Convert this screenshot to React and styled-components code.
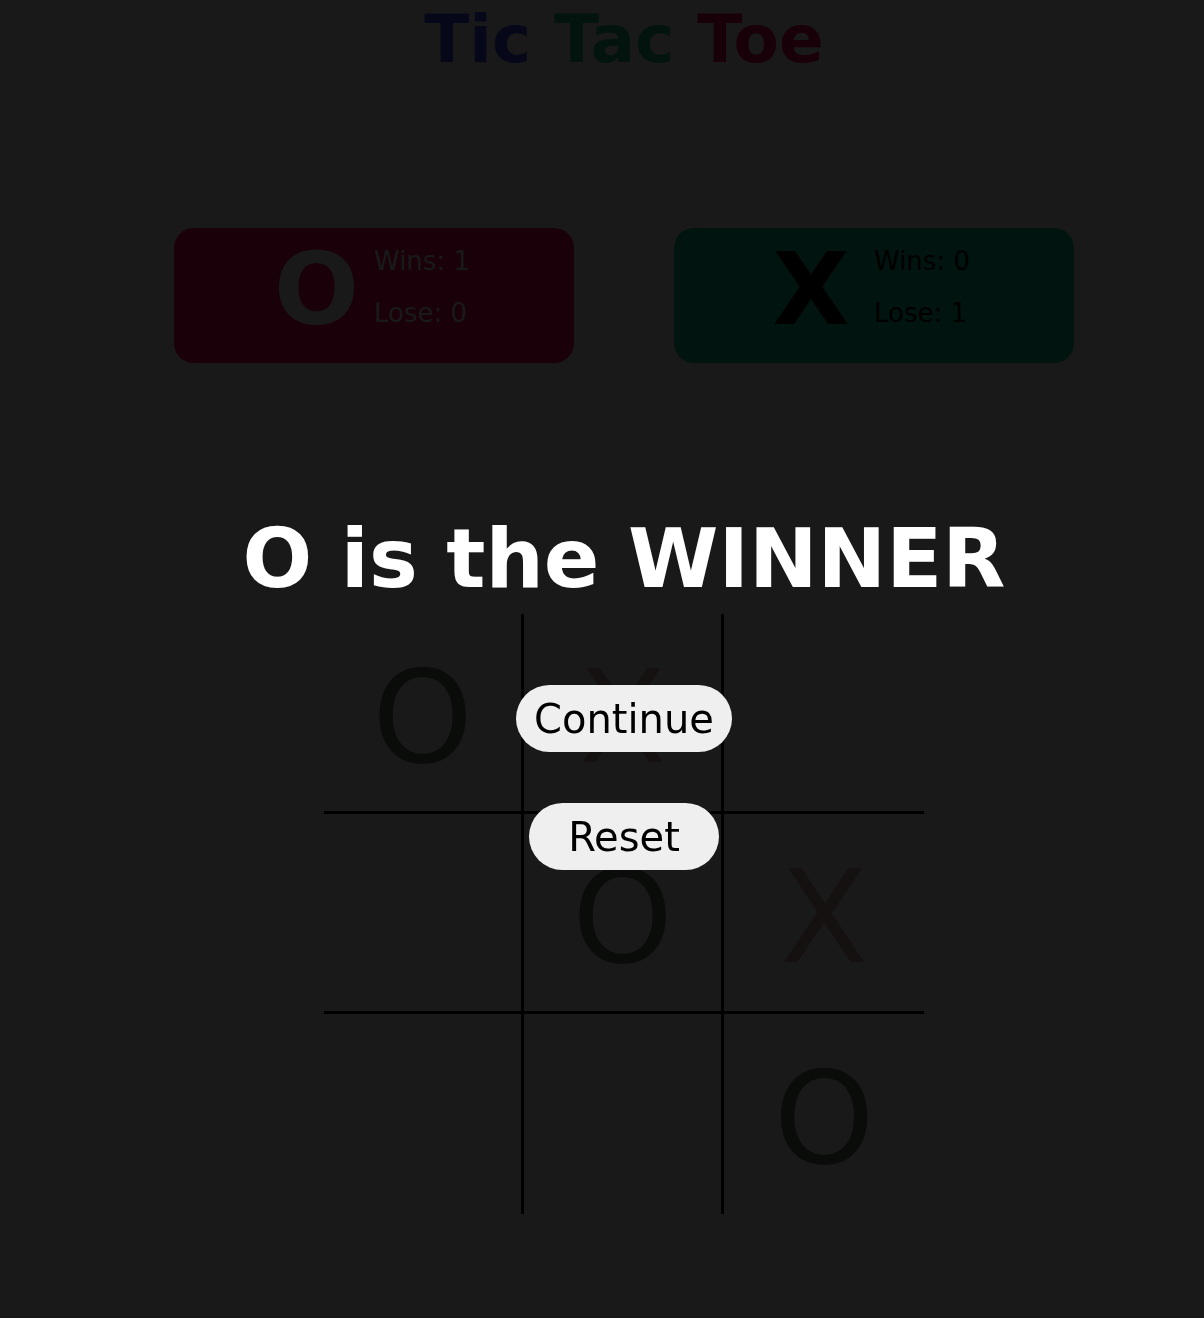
import styled, { createGlobalStyle } from "styled-components";

const GlobalStyle = createGlobalStyle`
  html, body {
    margin: 0;
    background: #ffffff;
    font-family: "DejaVu Sans", Verdana, sans-serif;
  }
`;

const Page = styled.div`
  display: flex;
  flex-direction: column;
  align-items: center;
  padding-left: 44px;
  box-sizing: border-box;
  width: 100%;
  min-height: 1318px;
`;

const Title = styled.h1`
  margin: 0;
  padding-top: 3px;
  font-size: 66px;
  line-height: 74px;
  font-weight: bold;
  white-space: nowrap;
`;

const TitleWord = styled.span`
  color: ${(p) => p.color};
`;

const Scores = styled.div`
  display: flex;
  gap: 100px;
  margin-top: 151px;
`;

const ScoreCard = styled.div`
  display: flex;
  align-items: flex-start;
  width: 400px;
  height: 135px;
  box-sizing: border-box;
  padding-left: ${(p) => p.pad}px;
  border-radius: 20px;
  background: ${(p) => p.bg};
  color: ${(p) => p.fg};
`;

const ScoreLetter = styled.div`
  width: 80px;
  margin-top: 12px;
  text-align: center;
  font-size: 100px;
  line-height: 100px;
  font-weight: bold;
`;

const ScoreLines = styled.div`
  display: flex;
  flex-direction: column;
  gap: 22px;
  margin-left: ${(p) => p.gap}px;
  padding-top: 18px;
  font-size: 26px;
  line-height: 30px;
`;

const Board = styled.div`
  display: grid;
  grid-template-columns: repeat(3, 200px);
  grid-template-rows: repeat(3, 200px);
  margin-top: 251px;
`;

const Cell = styled.div`
  display: flex;
  align-items: center;
  justify-content: center;
  box-sizing: border-box;
  padding-top: 10px;
  border-right: ${(p) => (p.right ? "3px solid #000" : "none")};
  border-bottom: ${(p) => (p.bottom ? "3px solid #000" : "none")};
  font-size: 128px;
  line-height: 128px;
  color: ${(p) => (p.mark === "X" ? "#dcaaaa" : "#667766")};
`;

const Overlay = styled.div`
  position: fixed;
  inset: 0;
  display: flex;
  flex-direction: column;
  align-items: center;
  box-sizing: border-box;
  padding-left: 44px;
  padding-top: 518px;
  background: rgba(0, 0, 0, 0.9);
`;

const Winner = styled.h2`
  margin: 0;
  font-size: 82px;
  line-height: 82px;
  font-weight: bold;
  color: #ffffff;
  white-space: nowrap;
`;

const Button = styled.button`
  margin-top: ${(p) => p.top}px;
  padding: 11px ${(p) => p.side}px 9px;
  border: none;
  border-radius: 34px;
  background: #efefef;
  color: #000;
  font-family: "DejaVu Sans", Verdana, sans-serif;
  font-size: 40px;
  line-height: 47px;
  cursor: pointer;
`;

const board = ["O", "X", "", "", "O", "X", "", "", "O"];

export default function App() {
  return (
    <>
      <GlobalStyle />
      <Page>
        <Title>
          <TitleWord color="#3c4bff">Tic</TitleWord>{" "}
          <TitleWord color="#14c882">Tac</TitleWord>{" "}
          <TitleWord color="#ff0050">Toe</TitleWord>
        </Title>
        <Scores>
          <ScoreCard bg="#ff0060" fg="#ffffff" pad={100}>
            <ScoreLetter>O</ScoreLetter>
            <ScoreLines gap={20}>
              <span>Wins: 1</span>
              <span>Lose: 0</span>
            </ScoreLines>
          </ScoreCard>
          <ScoreCard bg="#14c896" fg="#000000" pad={97}>
            <ScoreLetter>X</ScoreLetter>
            <ScoreLines gap={23}>
              <span>Wins: 0</span>
              <span>Lose: 1</span>
            </ScoreLines>
          </ScoreCard>
        </Scores>
        <Board>
          {board.map((mark, i) => (
            <Cell key={i} mark={mark} right={i % 3 < 2} bottom={i < 6}>
              {mark}
            </Cell>
          ))}
        </Board>
      </Page>
      <Overlay>
        <Winner>O is the WINNER</Winner>
        <Button top={85} side={18}>
          Continue
        </Button>
        <Button top={51} side={39}>
          Reset
        </Button>
      </Overlay>
    </>
  );
}
